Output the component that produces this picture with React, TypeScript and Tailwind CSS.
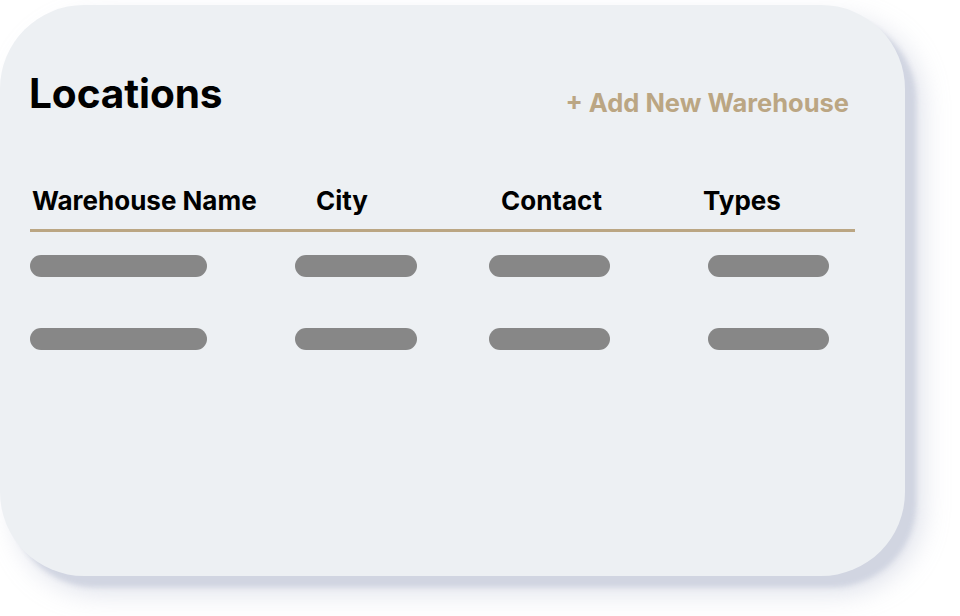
import React from "react";

const rows = [0, 1];

function Bar({ w }: { w: string }) {
  return <div className={`h-[22px] rounded-full bg-[#878787] ${w}`} />;
}

export default function App() {
  return (
    <div className="w-[960px] h-[616px] bg-white overflow-hidden font-['Inter',sans-serif]">
      <div className="mt-[5px] w-[905px] h-[571px] rounded-[84px] bg-[#edf0f3] shadow-[11px_11px_5px_rgba(208,212,224,0.95),16px_16px_28px_rgba(205,210,224,0.7)] pt-[69px] pl-[29px] pr-[56px]">
        <div className="flex items-start justify-between">
          <h1 className="text-[40.6px] leading-none font-bold text-black tracking-[-0.1px]">Locations</h1>
          <button className="mt-[16px] text-[25.5px] leading-none font-bold text-[#bba683]">+ Add New Warehouse</button>
        </div>

        <div className="mt-[72px] ml-[1px] w-[825px]">
          <div className="grid grid-cols-[284px_185px_202px_1fr] pl-[2px] pb-[15px] text-[26px] leading-none font-bold text-black">
            <span>Warehouse Name</span>
            <span>City</span>
            <span>Contact</span>
            <span>Types</span>
          </div>
          <div className="h-[3px] bg-[#bba683]" />
          <div className="flex flex-col gap-[51px] pt-[23px]">
            {rows.map((r) => (
              <div key={r} className="grid grid-cols-[265px_194px_219px_1fr]">
                <Bar w="w-[177px]" />
                <Bar w="w-[122px]" />
                <Bar w="w-[121px]" />
                <Bar w="w-[121px]" />
              </div>
            ))}
          </div>
        </div>
      </div>
    </div>
  );
}
